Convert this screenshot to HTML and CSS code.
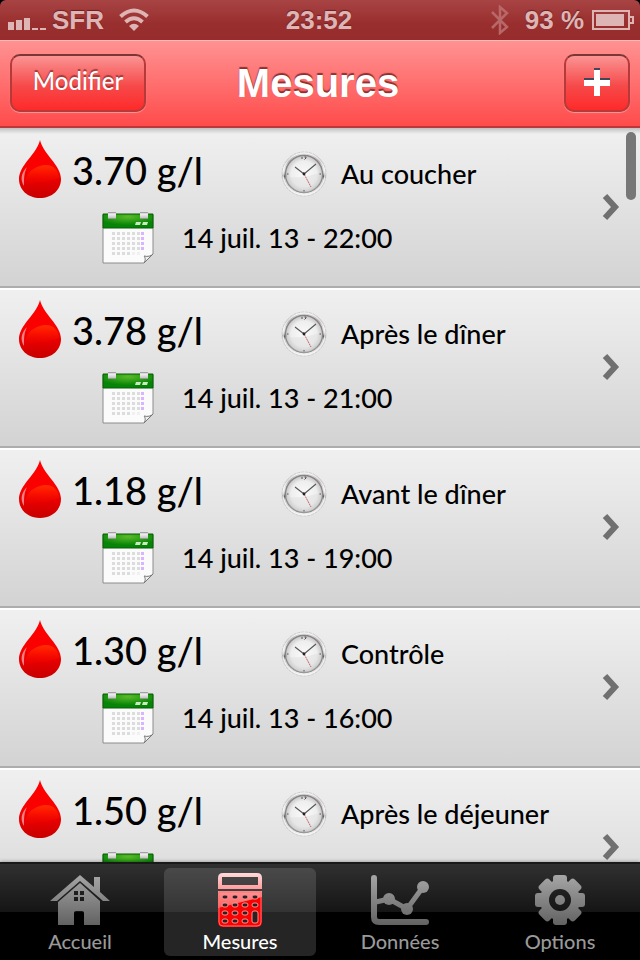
FILE: index.html
```
<!DOCTYPE html>
<html lang="fr">
<head>
<meta charset="utf-8">
<meta name="viewport" content="width=device-width">
<title>Mesures</title>
<link rel="stylesheet" href="styles.css">
</head>
<body>
<svg class="defs" aria-hidden="true">
	<defs>
		<linearGradient id="dropRed" x1="0" y1="0" x2="0" y2="1">
			<stop offset="0" stop-color="#f00"/><stop offset=".5" stop-color="#fa0000"/><stop offset="1" stop-color="#c80000"/>
		</linearGradient>
		<linearGradient id="dropShine" x1="0" y1="0" x2="0" y2="1">
			<stop offset="0" stop-color="#ff3000"/><stop offset="1" stop-color="#f00" stop-opacity="0"/>
		</linearGradient>
		<linearGradient id="metal" x1="0" y1="0" x2="0" y2="1">
			<stop offset="0" stop-color="#e9e9e9"/><stop offset=".2" stop-color="#bbb5b3"/><stop offset=".4" stop-color="#eee"/><stop offset=".5" stop-color="#b5b0ae"/><stop offset=".55" stop-color="#555"/><stop offset=".62" stop-color="#ccc"/><stop offset="1" stop-color="#f2f2f2"/>
		</linearGradient>
		<radialGradient id="dial">
			<stop offset="0" stop-color="#fafafa"/><stop offset=".7" stop-color="#eee"/><stop offset="1" stop-color="#c4c4c4"/>
		</radialGradient>
		<radialGradient id="calGreen" cx=".5" cy=".2" r=".6">
			<stop offset="0" stop-color="#58bb28"/><stop offset="1" stop-color="#078407"/>
		</radialGradient>
		<linearGradient id="ring" gradientUnits="userSpaceOnUse" x1="0" y1="0" x2="0" y2="8">
			<stop offset="0" stop-color="#888"/><stop offset=".25" stop-color="#f2f2f2"/><stop offset=".7" stop-color="#c8c8c8"/><stop offset="1" stop-color="#444"/>
		</linearGradient>
		<pattern id="days" x="10" y="20" width="5" height="5" patternUnits="userSpaceOnUse">
			<rect width="3" height="3" fill="#dcdcdc"/>
		</pattern>
		<linearGradient id="tabGrey" gradientUnits="userSpaceOnUse" x1="0" y1="2" x2="0" y2="52">
			<stop offset="0" stop-color="#a6a6a6"/><stop offset="1" stop-color="#626262"/>
		</linearGradient>
		<linearGradient id="calcShine" gradientUnits="userSpaceOnUse" x1="0" y1="0" x2="0" y2="40">
			<stop offset="0" stop-color="#ffdada"/><stop offset=".4" stop-color="#ff9c9c"/><stop offset="1" stop-color="#ff4c4c"/>
		</linearGradient>
	</defs>

	<symbol id="drop" viewBox="0 0 44 58">
		<path d="M22 0C25 14 43 25 43 39C43 50 34 58 22 58S1 50 1 39C1 25 19 14 22 0Z" fill="url(#dropRed)"/>
		<path d="M8 38C11 30 20 25 28 25C36 25 41 31 41 38C34 42 18 42 5 46C5 43 6 41 8 38Z" fill="url(#dropShine)"/>
		<path d="M9 27C3 33 2 40 6 46C6 38 6 33 9 27Z" fill="#fff" opacity=".5"/>
	</symbol>

	<symbol id="clock" viewBox="0 0 46 46">
		<circle cx="23" cy="23" r="22" fill="url(#metal)" stroke="#ccc" stroke-dasharray="3 1"/>
		<circle cx="23" cy="23" r="21" fill="none" stroke="#f6f6f6"/>
		<circle cx="23" cy="23" r="18.5" fill="url(#dial)" stroke="#858585" stroke-width="1.4"/>
		<path d="M5 26Q23 28 41 21A18 18 0 0 1 5 26Z" fill="#d8d8d8" opacity=".35"/>
		<path d="M21 6v2M23.500 6h1.500v1l-1.500 1.500M23 39v1.500M6 23h1.500M38.500 23h1.500" stroke="#555" fill="none"/>
		<path d="M14 16L23 23L35 13" fill="none" stroke="#555" stroke-width="1.1"/>
		<path d="M22 21L30 36" stroke="#c66" stroke-width="1" stroke-dasharray="2 .6"/>
		<circle cx="23" cy="23" r="1.400" fill="#222"/>
	</symbol>

	<symbol id="calendar" viewBox="0 0 52 52">
		<path d="M1 3H51V42L42 51H1Z" fill="#fbfbfb" stroke="#8c8c8c"/>
		<path d="M42 51C44 48 43 45 42 44C46 45 49 44 51 42Z" fill="#eee" stroke="#777"/>
		<path d="M1 2H51V16H1Z" fill="url(#calGreen)" stroke="#075f07"/>
		<path d="M10 20H39V38H30V43H10Z" fill="url(#days)"/>
		<path d="M30 40h3v3h-3zM35 40h3v3h-3z" fill="#f0f0f0"/>
		<path d="M39 20h3v3h-3zM39 25h3v3h-3zM39 30h3v3h-3zM39 35h3v3h-3z" fill="#d9b5ff"/>
		<path d="M34 10h5l-1 3h-5zM41 10h5l-1 3h-5z" fill="#c9e9c0"/>
		<path d="M6 0h8v7H6zM38 0h8v7h-8z" fill="url(#ring)"/>
	</symbol>

	<symbol id="chevron" viewBox="0 0 18 28">
		<path d="M3 3L13 14L3 25" fill="none" stroke="#707070" stroke-width="6"/>
	</symbol>

	<mask id="gearMask">
		<g fill="#fff">
			<circle cx="30" cy="27" r="20"/>
			<rect x="23" y="2" width="14" height="50" rx="3"/>
			<rect x="23" y="2" width="14" height="50" rx="3" transform="rotate(45 30 27)"/>
			<rect x="23" y="2" width="14" height="50" rx="3" transform="rotate(90 30 27)"/>
			<rect x="23" y="2" width="14" height="50" rx="3" transform="rotate(135 30 27)"/>
		</g>
		<circle cx="30" cy="27" r="11" fill="#000"/>
		<circle cx="30" cy="27" r="5" fill="#fff"/>
	</mask>
</svg>

<div class="app">
	<div class="status">
		<div class="status-left">
			<svg class="signal" viewBox="0 0 38 16"><path d="M0 7h6v8H0zM8 5h6v10H8zM16 3h6v12h-6zM24 13h6v2h-6zM32 13h6v2h-6z" fill="#deb5b5"/></svg>
			<span>SFR</span>
			<svg class="wifi" viewBox="0 0 32 24">
				<path d="M2.500 8.500Q16 -3.500 29.500 8.500M7.500 14Q16 6.500 24.500 14" fill="none" stroke="#deb5b5" stroke-width="4"/>
				<path d="M11 18Q16 13.500 21 18L16 23Z" fill="#deb5b5"/>
			</svg>
		</div>
		<time>23:52</time>
		<div class="status-right">
			<svg class="bluetooth" viewBox="0 0 18 30"><path d="M1 7L16 22L9 28V2L16 8L1 23" fill="none" stroke="#b86868" stroke-width="2.500"/></svg>
			<span>93 %</span>
			<svg class="battery" viewBox="0 0 42 20"><path d="M1 1H37V19H1ZM38 7H41V13H38" fill="none" stroke="#deb5b5" stroke-width="2"/><path d="M4 4h28v12H4z" fill="#deb5b5"/></svg>
		</div>
	</div>

	<header class="navbar">
		<button type="button" class="btn btn-edit">Modifier</button>
		<h1>Mesures</h1>
		<button type="button" class="btn btn-add" aria-label="Ajouter">
			<svg viewBox="0 0 26 28"><path d="M10 0h6v10h10v6H16v10h-6V16H0v-6h10z" fill="#45455a"/><path d="M10 2h6v10h10v6H16v10h-6V18H0v-6h10z" fill="#fff"/></svg>
		</button>
	</header>

	<main class="list-wrap">
		<ul class="list">
			<li><a class="row" href="#">
				<div class="info">
					<div class="line">
						<svg class="drop"><use href="#drop"/></svg>
						<span class="value">3.70 g/l</span>
						<svg class="clock"><use href="#clock"/></svg>
						<span class="text">Au coucher</span>
					</div>
					<div class="line line-date">
						<svg class="calendar"><use href="#calendar"/></svg>
						<span class="text">14 juil. 13 - 22:00</span>
					</div>
				</div>
				<svg class="chevron"><use href="#chevron"/></svg>
			</a></li>
			<li><a class="row" href="#">
				<div class="info">
					<div class="line">
						<svg class="drop"><use href="#drop"/></svg>
						<span class="value">3.78 g/l</span>
						<svg class="clock"><use href="#clock"/></svg>
						<span class="text">Après le dîner</span>
					</div>
					<div class="line line-date">
						<svg class="calendar"><use href="#calendar"/></svg>
						<span class="text">14 juil. 13 - 21:00</span>
					</div>
				</div>
				<svg class="chevron"><use href="#chevron"/></svg>
			</a></li>
			<li><a class="row" href="#">
				<div class="info">
					<div class="line">
						<svg class="drop"><use href="#drop"/></svg>
						<span class="value">1.18 g/l</span>
						<svg class="clock"><use href="#clock"/></svg>
						<span class="text">Avant le dîner</span>
					</div>
					<div class="line line-date">
						<svg class="calendar"><use href="#calendar"/></svg>
						<span class="text">14 juil. 13 - 19:00</span>
					</div>
				</div>
				<svg class="chevron"><use href="#chevron"/></svg>
			</a></li>
			<li><a class="row" href="#">
				<div class="info">
					<div class="line">
						<svg class="drop"><use href="#drop"/></svg>
						<span class="value">1.30 g/l</span>
						<svg class="clock"><use href="#clock"/></svg>
						<span class="text">Contrôle</span>
					</div>
					<div class="line line-date">
						<svg class="calendar"><use href="#calendar"/></svg>
						<span class="text">14 juil. 13 - 16:00</span>
					</div>
				</div>
				<svg class="chevron"><use href="#chevron"/></svg>
			</a></li>
			<li><a class="row" href="#">
				<div class="info">
					<div class="line">
						<svg class="drop"><use href="#drop"/></svg>
						<span class="value">1.50 g/l</span>
						<svg class="clock"><use href="#clock"/></svg>
						<span class="text">Après le déjeuner</span>
					</div>
					<div class="line line-date">
						<svg class="calendar"><use href="#calendar"/></svg>
					</div>
				</div>
				<svg class="chevron"><use href="#chevron"/></svg>
			</a></li>
		</ul>
		<div class="scrollbar"></div>
	</main>

	<nav class="tabbar">
		<a class="tab" href="#">
			<svg viewBox="0 0 60 54" fill="url(#tabGrey)">
				<path d="M0 28L30 2L44 14V4H50V19L60 28H53L30 8L7 28Z"/>
				<path d="M8 29L30 10L50 28V52H34V40Q34 38 32 38H26Q24 38 24 40V52H8ZM24 18V22H28V18ZM30 18V22H34V18ZM24 24V28H28V24ZM30 24V28H34V24Z" fill-rule="evenodd"/>
			</svg>
			<span>Accueil</span>
		</a>
		<a class="tab active" href="#">
			<svg viewBox="0 0 60 54">
				<path d="M13 0H47Q52 0 52 5V16H8V5Q8 0 13 0ZM12 4V12H48V4Z" fill="url(#calcShine)" fill-rule="evenodd"/>
				<path d="M8 18H52V49Q52 54 47 54H13Q8 54 8 49Z" fill="#fd0000"/>
				<path d="M8 18H52V24Q32 29 8 35Z" fill="url(#calcShine)"/>
				<path d="M9 19H51V49Q51 53 47 53H13Q9 53 9 49Z" fill="none" stroke="#ff7272"/>
				<g fill="#2c2022" stroke="#ff9292">
					<rect x="12" y="22" width="6" height="4" rx="2"/><rect x="22" y="22" width="6" height="4" rx="2"/><rect x="32" y="22" width="6" height="4" rx="2"/><rect x="42" y="22" width="6" height="4" rx="2"/>
					<rect x="12" y="30" width="6" height="4" rx="2"/><rect x="22" y="30" width="6" height="4" rx="2"/><rect x="32" y="30" width="6" height="4" rx="2"/><rect x="42" y="30" width="6" height="4" rx="2"/>
					<rect x="12" y="38" width="6" height="4" rx="2"/><rect x="22" y="38" width="6" height="4" rx="2"/><rect x="32" y="38" width="6" height="4" rx="2"/><rect x="42" y="38" width="6" height="12" rx="2"/>
					<rect x="12" y="46" width="6" height="4" rx="2"/><rect x="22" y="46" width="6" height="4" rx="2"/><rect x="32" y="46" width="6" height="4" rx="2"/>
				</g>
			</svg>
			<span>Mesures</span>
		</a>
		<a class="tab" href="#">
			<svg viewBox="0 0 60 54" fill="none" stroke="url(#tabGrey)" stroke-linecap="round">
				<path d="M4 5V44Q4 49 9 49H56" stroke-width="6"/>
				<path d="M6 29L19 26L37 36L53 14" stroke-width="5"/>
				<g fill="url(#tabGrey)" stroke="none"><circle cx="19" cy="26" r="6"/><circle cx="37" cy="36" r="6"/><circle cx="53" cy="14" r="6"/></g>
			</svg>
			<span>Données</span>
		</a>
		<a class="tab" href="#">
			<svg viewBox="0 0 60 54"><rect width="60" height="54" fill="url(#tabGrey)" mask="url(#gearMask)"/></svg>
			<span>Options</span>
		</a>
	</nav>
</div>
</body>
</html>
```
FILE: styles.css
```
*{box-sizing:border-box;}
body,ul,h1{margin:0;padding:0;}
body{background:#000;font-family:Futura,Lato,"Noto Sans",sans-serif;color:#000;}
li{list-style:none;}
a{color:inherit;text-decoration:none;}
svg{display:block;flex:none;}
.defs{position:absolute;width:0;height:0;}
.app{display:flex;flex-direction:column;height:100vh;overflow:hidden;}

/* status bar */
.status{display:grid;grid-template-columns:1fr auto 1fr;align-items:center;height:40px;flex:none;padding:0 6px 0 8px;border-radius:6px 6px 0 0;background:linear-gradient(#a84444,#992e2e 60%,#962c2c);color:#deb5b5;font:bold 26px/40px "Liberation Sans",Arial,sans-serif;text-shadow:0 -1px 1px #6c2020;}
.status-left,.status-right{display:flex;align-items:center;}
.status-right{justify-content:flex-end;}
.status time{margin-right:4px;}
.signal{width:38px;height:16px;margin:6px 6px 0 0;}
.wifi{width:32px;height:24px;margin-left:14px;}
.bluetooth{width:18px;height:30px;margin-right:16px;}
.battery{width:42px;height:20px;margin-left:8px;}

/* navigation bar */
.navbar{display:grid;grid-template-columns:1fr auto 1fr;align-items:center;height:88px;flex:none;padding:0 10px 2px;border-top:1px solid #ffb9b9;border-bottom:2px solid #bd3838;background:linear-gradient(#ff9292,#ff4b4b);}
.navbar h1{margin-right:4px;color:#fff;font:bold 40px/56px "Liberation Sans",Arial,sans-serif;text-shadow:0 -2px 1px #8c3030;}
.btn{height:58px;padding:0;border:2px solid #b63a3a;border-top-color:#7d3535;border-radius:10px;background:linear-gradient(#fb9494,#f64a4a 55%,#ff2a2a);box-shadow:0 1px 1px #ff9a9a;color:#fff;font:500 24px/50px Futura,Lato,sans-serif;text-shadow:0 -2px 1px #a03838;}
.btn-edit{width:136px;justify-self:start;padding-bottom:4px;}
.btn-add{display:flex;align-items:center;justify-content:center;width:66px;justify-self:end;padding-bottom:2px;}
.btn-add svg{width:26px;height:28px;}

/* measures */
.list-wrap{position:relative;flex:1;min-height:0;overflow:hidden;}
.list-wrap:before{content:"";position:absolute;left:0;right:0;top:0;height:6px;background:linear-gradient(rgba(0,0,0,.2),transparent);}
.row{display:flex;align-items:center;height:160px;padding:0 20px 2px 18px;border-top:2px solid #fff;border-bottom:2px solid #adadad;background:linear-gradient(#f0f0f0,#d3d3d3);}
li:first-child .row{border-top-color:#efefef;}
.info{flex:1;align-self:stretch;padding-top:10px;}
.line{display:flex;align-items:center;height:58px;}
.line-date{height:52px;margin-top:14px;padding-left:84px;}
.drop{width:44px;height:58px;}
.value{flex:none;width:219px;padding:2px 0 0 10px;font-size:38px;line-height:48px;font-weight:500;}
.text{padding-left:14px;font-size:27px;line-height:36px;font-weight:500;white-space:nowrap;}
.line-date .text{padding-left:28px;}
.clock{width:46px;height:46px;margin-top:10px;}
.line .clock+.text{padding-top:10px;}
.calendar{width:52px;height:52px;}
.chevron{width:18px;height:28px;}
.scrollbar{position:absolute;right:4px;top:4px;width:10px;height:68px;border-radius:5px;background:#777;}

/* tab bar */
.tabbar{display:flex;height:98px;flex:none;padding:4px 0;border-top:2px solid #1a1a1a;background:linear-gradient(#303030,#151515 48px,#000 48px);box-shadow:0 0 4px rgba(0,0,0,.4);position:relative;}
.tab{flex:1;display:flex;flex-direction:column;align-items:center;margin:0 4px;padding-top:5px;border-radius:6px;color:#999;font-size:20px;line-height:28px;font-weight:500;}
.tab svg{width:60px;height:54px;}
.tab.active{background:linear-gradient(#494949,#343434 44px,#252525 44px);color:#fff;}
```
